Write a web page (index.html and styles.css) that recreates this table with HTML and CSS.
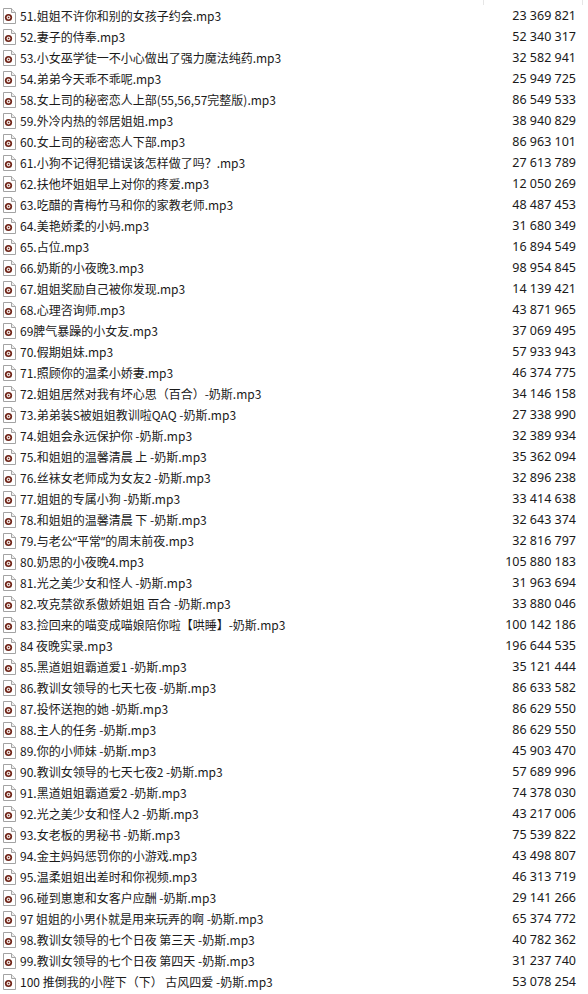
FILE: index.html
```html
<!DOCTYPE html>
<html lang="zh">
<head>
<meta charset="utf-8">
<link rel="stylesheet" href="styles.css">
</head>
<body>
<svg class="defs" width="0" height="0" aria-hidden="true">
  <symbol id="mp3" viewBox="0 0 13 16">
    <path d="M0.5 0.5 H8.5 L12.5 4.5 V15.5 H0.5 Z" fill="#fff" stroke="#a3a3a3"/>
    <path d="M8.5 0.5 V4.5 H12.5" fill="#eee" stroke="#a3a3a3"/>
    <circle cx="5.5" cy="9.5" r="3.6" fill="#6e2216"/>
    <circle cx="5.5" cy="9.5" r="1.9" fill="#f2e6e2"/>
    <path d="M4.9 8.5 L6.7 9.5 L4.9 10.5 Z" fill="#6e2216"/>
  </symbol>
</svg>
<div class="header">
  <div class="hspace"></div>
  <div class="hcell"></div>
</div>
<ul class="list">
  <li class="row"><svg class="icon"><use href="#mp3"/></svg><span class="name">51.姐姐不许你和别的女孩子约会.mp3</span><span class="size">23 369 821</span></li>
  <li class="row"><svg class="icon"><use href="#mp3"/></svg><span class="name">52.妻子的侍奉.mp3</span><span class="size">52 340 317</span></li>
  <li class="row"><svg class="icon"><use href="#mp3"/></svg><span class="name">53.小女巫学徒一不小心做出了强力魔法纯药.mp3</span><span class="size">32 582 941</span></li>
  <li class="row"><svg class="icon"><use href="#mp3"/></svg><span class="name">54.弟弟今天乖不乖呢.mp3</span><span class="size">25 949 725</span></li>
  <li class="row"><svg class="icon"><use href="#mp3"/></svg><span class="name">58.女上司的秘密恋人上部(55,56,57完整版).mp3</span><span class="size">86 549 533</span></li>
  <li class="row"><svg class="icon"><use href="#mp3"/></svg><span class="name">59.外冷内热的邻居姐姐.mp3</span><span class="size">38 940 829</span></li>
  <li class="row"><svg class="icon"><use href="#mp3"/></svg><span class="name">60.女上司的秘密恋人下部.mp3</span><span class="size">86 963 101</span></li>
  <li class="row"><svg class="icon"><use href="#mp3"/></svg><span class="name">61.小狗不记得犯错误该怎样做了吗？.mp3</span><span class="size">27 613 789</span></li>
  <li class="row"><svg class="icon"><use href="#mp3"/></svg><span class="name">62.扶他坏姐姐早上对你的疼爱.mp3</span><span class="size">12 050 269</span></li>
  <li class="row"><svg class="icon"><use href="#mp3"/></svg><span class="name">63.吃醋的青梅竹马和你的家教老师.mp3</span><span class="size">48 487 453</span></li>
  <li class="row"><svg class="icon"><use href="#mp3"/></svg><span class="name">64.美艳娇柔的小妈.mp3</span><span class="size">31 680 349</span></li>
  <li class="row"><svg class="icon"><use href="#mp3"/></svg><span class="name">65.占位.mp3</span><span class="size">16 894 549</span></li>
  <li class="row"><svg class="icon"><use href="#mp3"/></svg><span class="name">66.奶斯的小夜晚3.mp3</span><span class="size">98 954 845</span></li>
  <li class="row"><svg class="icon"><use href="#mp3"/></svg><span class="name">67.姐姐奖励自己被你发现.mp3</span><span class="size">14 139 421</span></li>
  <li class="row"><svg class="icon"><use href="#mp3"/></svg><span class="name">68.心理咨询师.mp3</span><span class="size">43 871 965</span></li>
  <li class="row"><svg class="icon"><use href="#mp3"/></svg><span class="name">69脾气暴躁的小女友.mp3</span><span class="size">37 069 495</span></li>
  <li class="row"><svg class="icon"><use href="#mp3"/></svg><span class="name">70.假期姐妹.mp3</span><span class="size">57 933 943</span></li>
  <li class="row"><svg class="icon"><use href="#mp3"/></svg><span class="name">71.照顾你的温柔小娇妻.mp3</span><span class="size">46 374 775</span></li>
  <li class="row"><svg class="icon"><use href="#mp3"/></svg><span class="name">72.姐姐居然对我有坏心思（百合）-奶斯.mp3</span><span class="size">34 146 158</span></li>
  <li class="row"><svg class="icon"><use href="#mp3"/></svg><span class="name">73.弟弟装S被姐姐教训啦QAQ -奶斯.mp3</span><span class="size">27 338 990</span></li>
  <li class="row"><svg class="icon"><use href="#mp3"/></svg><span class="name">74.姐姐会永远保护你 -奶斯.mp3</span><span class="size">32 389 934</span></li>
  <li class="row"><svg class="icon"><use href="#mp3"/></svg><span class="name">75.和姐姐的温馨清晨 上 -奶斯.mp3</span><span class="size">35 362 094</span></li>
  <li class="row"><svg class="icon"><use href="#mp3"/></svg><span class="name">76.丝袜女老师成为女友2 -奶斯.mp3</span><span class="size">32 896 238</span></li>
  <li class="row"><svg class="icon"><use href="#mp3"/></svg><span class="name">77.姐姐的专属小狗 -奶斯.mp3</span><span class="size">33 414 638</span></li>
  <li class="row"><svg class="icon"><use href="#mp3"/></svg><span class="name">78.和姐姐的温馨清晨 下 -奶斯.mp3</span><span class="size">32 643 374</span></li>
  <li class="row"><svg class="icon"><use href="#mp3"/></svg><span class="name">79.与老公<span class="q">“</span>平常<span class="q">”</span>的周末前夜.mp3</span><span class="size">32 816 797</span></li>
  <li class="row"><svg class="icon"><use href="#mp3"/></svg><span class="name">80.奶思的小夜晚4.mp3</span><span class="size">105 880 183</span></li>
  <li class="row"><svg class="icon"><use href="#mp3"/></svg><span class="name">81.光之美少女和怪人 -奶斯.mp3</span><span class="size">31 963 694</span></li>
  <li class="row"><svg class="icon"><use href="#mp3"/></svg><span class="name">82.攻克禁欲系傲娇姐姐 百合 -奶斯.mp3</span><span class="size">33 880 046</span></li>
  <li class="row"><svg class="icon"><use href="#mp3"/></svg><span class="name">83.捡回来的喵变成喵娘陪你啦【哄睡】-奶斯.mp3</span><span class="size">100 142 186</span></li>
  <li class="row"><svg class="icon"><use href="#mp3"/></svg><span class="name">84 夜晚实录.mp3</span><span class="size">196 644 535</span></li>
  <li class="row"><svg class="icon"><use href="#mp3"/></svg><span class="name">85.黑道姐姐霸道爱1 -奶斯.mp3</span><span class="size">35 121 444</span></li>
  <li class="row"><svg class="icon"><use href="#mp3"/></svg><span class="name">86.教训女领导的七天七夜 -奶斯.mp3</span><span class="size">86 633 582</span></li>
  <li class="row"><svg class="icon"><use href="#mp3"/></svg><span class="name">87.投怀送抱的她 -奶斯.mp3</span><span class="size">86 629 550</span></li>
  <li class="row"><svg class="icon"><use href="#mp3"/></svg><span class="name">88.主人的任务 -奶斯.mp3</span><span class="size">86 629 550</span></li>
  <li class="row"><svg class="icon"><use href="#mp3"/></svg><span class="name">89.你的小师妹 -奶斯.mp3</span><span class="size">45 903 470</span></li>
  <li class="row"><svg class="icon"><use href="#mp3"/></svg><span class="name">90.教训女领导的七天七夜2 -奶斯.mp3</span><span class="size">57 689 996</span></li>
  <li class="row"><svg class="icon"><use href="#mp3"/></svg><span class="name">91.黑道姐姐霸道爱2 -奶斯.mp3</span><span class="size">74 378 030</span></li>
  <li class="row"><svg class="icon"><use href="#mp3"/></svg><span class="name">92.光之美少女和怪人2 -奶斯.mp3</span><span class="size">43 217 006</span></li>
  <li class="row"><svg class="icon"><use href="#mp3"/></svg><span class="name">93.女老板的男秘书 -奶斯.mp3</span><span class="size">75 539 822</span></li>
  <li class="row"><svg class="icon"><use href="#mp3"/></svg><span class="name">94.金主妈妈惩罚你的小游戏.mp3</span><span class="size">43 498 807</span></li>
  <li class="row"><svg class="icon"><use href="#mp3"/></svg><span class="name">95.温柔姐姐出差时和你视频.mp3</span><span class="size">46 313 719</span></li>
  <li class="row"><svg class="icon"><use href="#mp3"/></svg><span class="name">96.碰到崽崽和女客户应酬 -奶斯.mp3</span><span class="size">29 141 266</span></li>
  <li class="row"><svg class="icon"><use href="#mp3"/></svg><span class="name">97 姐姐的小男仆就是用来玩弄的啊 -奶斯.mp3</span><span class="size">65 374 772</span></li>
  <li class="row"><svg class="icon"><use href="#mp3"/></svg><span class="name">98.教训女领导的七个日夜 第三天 -奶斯.mp3</span><span class="size">40 782 362</span></li>
  <li class="row"><svg class="icon"><use href="#mp3"/></svg><span class="name">99.教训女领导的七个日夜 第四天 -奶斯.mp3</span><span class="size">31 237 740</span></li>
  <li class="row"><svg class="icon"><use href="#mp3"/></svg><span class="name">100 推倒我的小陛下（下） 古风四爱 -奶斯.mp3</span><span class="size">53 078 254</span></li>
</ul>
</body>
</html>
```

FILE: styles.css
```css
html, body {
  margin: 0;
  padding: 0;
  background: #ffffff;
}
body {
  width: 588px;
  color: #1a1a1a;
  font-family: "Noto Sans CJK SC", "Noto Sans", sans-serif;
  font-size: 12px;
}
.defs {
  position: absolute;
  width: 0;
  height: 0;
  overflow: hidden;
}
.header {
  display: flex;
  height: 5px;
}
.hspace {
  width: 483px;
}
.hcell {
  width: 98px;
  border-left: 1px solid #e6e6e6;
  border-right: 1px solid #e6e6e6;
}
.list {
  list-style: none;
  margin: 0;
  padding: 0;
}
.row {
  display: flex;
  align-items: center;
  height: 21px;
  padding-left: 3px;
  padding-right: 12px;
}
.icon {
  width: 13px;
  height: 16px;
  flex: none;
  margin-right: 4px;
}
.name {
  flex: 1;
  white-space: nowrap;
  line-height: 21px;
}
.q {
  font-family: "Noto Sans", sans-serif;
}
.size {
  flex: none;
  font-family: "Noto Sans", sans-serif;
  font-size: 12.5px;
  text-align: right;
  line-height: 21px;
  color: #1a1a1a;
}
```
